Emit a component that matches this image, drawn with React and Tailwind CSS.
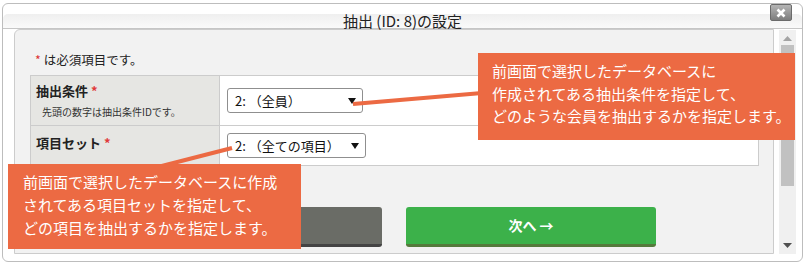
const jp = { fontFamily: '"Noto Sans CJK JP", "Noto Sans", sans-serif' };

function FakeSelect({ label, width }) {
    return (
        <div
            className={`flex h-[25px] items-center justify-between rounded-[3px] border border-[#8f8f8f] bg-white pl-[7px] pr-[6px] text-[13px] text-[#111] ${width}`}
        >
            <span className="leading-none">{label}</span>
            <svg width="8" height="6" viewBox="0 0 8 6">
                <path d="M0 0 L8 0 L4 6 Z" fill="#111" />
            </svg>
        </div>
    );
}

function Scrollbar() {
    return (
        <div className="flex h-[224px] w-[17px] flex-col items-center bg-[#f0f0f0]">
            <svg className="mt-[6px]" width="9" height="5" viewBox="0 0 9 5">
                <path d="M0 5 L4.5 0 L9 5 Z" fill="#a3a3a3" />
            </svg>
            <div className="mt-[4px] h-[141px] w-[13px] bg-[#c1c1c1]" />
            <div className="flex-1" />
            <svg className="mb-[6px]" width="9" height="5" viewBox="0 0 9 5">
                <path d="M0 0 L9 0 L4.5 5 Z" fill="#505050" />
            </svg>
        </div>
    );
}

export default function App() {
    return (
        <div className="relative h-[265px] w-[805px] overflow-hidden bg-white" style={jp}>
            <div className="ml-[2px] mt-[3px] h-[259px] w-[801px] rounded-[6px] border border-[#bdbdbd] bg-white">
                {/* title bar */}
                <div className="relative h-[25px] pt-[10px]">
                    <div className="h-[15px] rounded-t-[5px] border-b border-[#c6c6c6] bg-[linear-gradient(to_bottom,#efefef,#fafafa)]" />
                    <div className="absolute left-0 right-0 top-[7px] text-center text-[15px] leading-[20px] text-[#222]">
                        抽出 (ID: 8)の設定
                    </div>
                    <div className="absolute right-[10px] top-0 flex h-[17px] w-[22px] items-center justify-center rounded-[2px] border border-[#6b6b6b] bg-[linear-gradient(to_bottom,#b5b5b5,#7d7d7d)]">
                        <svg width="10" height="10" viewBox="0 0 10 10">
                            <path d="M1.5 1.5 L8.5 8.5 M8.5 1.5 L1.5 8.5" stroke="#fff" strokeWidth="2.6" />
                        </svg>
                    </div>
                </div>

                {/* body */}
                <div className="flex pl-[11px]">
                    <div className="h-[225px] w-[760px] rounded-tl-[6px] border border-[#cccccc] bg-[#f2f2f2] pl-[15px] pt-[22px]">
                        <p className="pl-[5px] text-[12.5px] leading-[16px] text-[#222]">
                            <span className="text-[#d33]">*</span> は必須項目です。
                        </p>
                        <div className="mt-[7px] grid w-[729px] grid-cols-[189px_1fr] border border-[#cccccc] bg-white">
                            <div className="h-[50px] border-b border-r border-[#cccccc] bg-[#e6e6e3] pl-[5px] pt-[6px]">
                                <p className="text-[13px] font-bold leading-[18px] text-[#222]">
                                    抽出条件 <span className="text-[#e03a3a]">*</span>
                                </p>
                                <p className="mt-[5px] pl-[6px] text-[10px] leading-[14px] text-[#333]">
                                    先頭の数字は抽出条件IDです。
                                </p>
                            </div>
                            <div className="h-[50px] border-b border-[#cccccc] pl-[7px] pt-[12px]">
                                <FakeSelect label="2: （全員）" width="w-[136px]" />
                            </div>
                            <div className="h-[39px] border-r border-[#cccccc] bg-[#e6e6e3] pl-[5px] pt-[8px]">
                                <p className="text-[13px] font-bold leading-[18px] text-[#222]">
                                    項目セット <span className="text-[#e03a3a]">*</span>
                                </p>
                            </div>
                            <div className="h-[39px] pl-[7px] pt-[7px]">
                                <FakeSelect label="2: （全ての項目）" width="w-[139px]" />
                            </div>
                        </div>
                        <div className="ml-[-15px] mt-[41px] flex justify-center gap-[24px]">
                            <button className="h-[40px] w-[250px] rounded-[3px] border-b-[3px] border-[#444444] bg-[#6a6c66]" />
                            <button className="flex h-[40px] w-[250px] items-center justify-center rounded-[3px] border-b-[3px] border-[#557a3c] bg-[#3cb14a] text-[14px] font-bold text-white">
                                次へ →
                            </button>
                        </div>
                    </div>
                    <div className="ml-[5px] mt-[1px]">
                        <Scrollbar />
                    </div>
                </div>
            </div>

            {/* annotation pointers */}
            <svg className="absolute left-0 top-0" width="805" height="265">
                <line x1="353" y1="104" x2="482" y2="93" stroke="#ec6a43" strokeWidth="4" />
                <line x1="232" y1="148" x2="150" y2="169" stroke="#ec6a43" strokeWidth="4" />
            </svg>

            {/* annotation callouts */}
            <div className="absolute left-[478px] top-[53px] h-[87px] w-[317px] bg-[#ec6a43] pl-[14px] pt-[7px] text-[15px] leading-[22.5px] text-white">
                <p>前画面で選択したデータベースに</p>
                <p>作成されてある抽出条件を指定して、</p>
                <p>どのような会員を抽出するかを指定します。</p>
            </div>
            <div className="absolute left-[8px] top-[164px] h-[85px] w-[293px] bg-[#ec6a43] pl-[15px] pt-[6px] text-[15px] leading-[23px] text-white">
                <p>前画面で選択したデータベースに作成</p>
                <p>されてある項目セットを指定して、</p>
                <p>どの項目を抽出するかを指定します。</p>
            </div>
        </div>
    );
}
